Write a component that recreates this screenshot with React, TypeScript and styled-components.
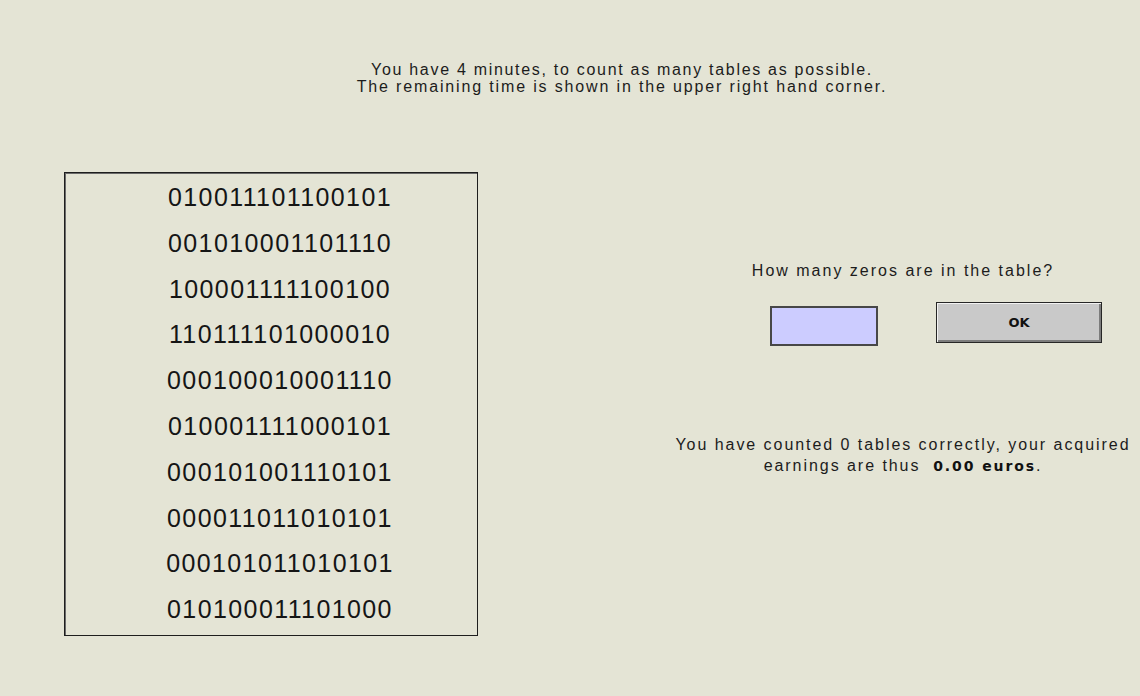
import React from "react";
import styled, { createGlobalStyle } from "styled-components";

const Global = createGlobalStyle`
  html, body { margin: 0; padding: 0; background: #e4e4d5; }
  body { font-family: "Liberation Sans", Arial, sans-serif; color: #1a1a1a; }
`;

const Page = styled.div`
  width: 1140px;
  height: 696px;
  background: #e4e4d5;
  display: flex;
  flex-direction: column;
  overflow: hidden;
`;

const Header = styled.div`
  padding: 61px 0 0 104px;
  text-align: center;
  font-size: 16px;
  line-height: 17px;
  color: #1c1c1c;
`;

const HeaderLine = styled.div<{ $spacing: number }>`
  letter-spacing: ${(p) => p.$spacing}px;
`;

const Main = styled.div`
  display: flex;
  margin-top: 77px;
`;

const TableBox = styled.div`
  margin-left: 64px;
  width: 394px;
  height: 458px;
  border: 1px solid #1e1e1e;
  box-shadow: inset 1px 1px 0 #6a6a6a;
  padding: 2px 0 2px 18px;
  box-sizing: content-box;
  display: flex;
  flex-direction: column;
  align-items: center;
`;

const Row = styled.div`
  font-size: 25px;
  line-height: 45.8px;
  height: 45.8px;
  letter-spacing: 1.4px;
  color: #151515;
`;

const Panel = styled.div`
  margin-left: 190px;
  width: 470px;
  display: flex;
  flex-direction: column;
`;

const Question = styled.div`
  margin-top: 90px;
  text-align: center;
  font-size: 16px;
  line-height: 18px;
  letter-spacing: 2px;
  color: #1c1c1c;
`;

const Controls = styled.div`
  display: flex;
  align-items: flex-start;
  gap: 58px;
  padding-left: 102px;
  margin-top: 22px;
`;

const Input = styled.input`
  margin-top: 4px;
  width: 108px;
  height: 40px;
  box-sizing: border-box;
  background: #ccccff;
  border: 2px solid #474747;
  padding: 0;
  outline: none;
`;

const OkButton = styled.button`
  width: 166px;
  height: 41px;
  box-sizing: border-box;
  background: #c9c9c9;
  border: 1px solid #262626;
  box-shadow: inset 1px 1px 0 #f2f2f2, inset -2px -2px 0 #7c7c7c;
  font-family: "DejaVu Sans", Verdana, sans-serif;
  font-weight: bold;
  font-size: 13px;
  color: #111;
  padding: 0;
`;

const Earnings = styled.div`
  margin-top: 88px;
  text-align: center;
  font-size: 16px;
  line-height: 21px;
  letter-spacing: 1.95px;
  color: #1c1c1c;
`;

const Bold = styled.b`
  font-family: "DejaVu Sans", Verdana, sans-serif;
  font-size: 14px;
  letter-spacing: 1.9px;
  color: #111;
`;

const rows = [
  "010011101100101",
  "001010001101110",
  "100001111100100",
  "110111101000010",
  "000100010001110",
  "010001111000101",
  "000101001110101",
  "000011011010101",
  "000101011010101",
  "010100011101000",
];

export default function App() {
  return (
    <>
      <Global />
      <Page>
        <Header>
          <HeaderLine $spacing={1.7}>
            You have 4 minutes, to count as many tables as possible.
          </HeaderLine>
          <HeaderLine $spacing={1.85}>
            The remaining time is shown in the upper right hand corner.
          </HeaderLine>
        </Header>
        <Main>
          <TableBox>
            {rows.map((r, i) => (
              <Row key={i}>{r}</Row>
            ))}
          </TableBox>
          <Panel>
            <Question>How many zeros are in the table?</Question>
            <Controls>
              <Input />
              <OkButton>OK</OkButton>
            </Controls>
            <Earnings>
              You have counted 0 tables correctly, your acquired
              <br />
              earnings are thus&nbsp; <Bold>0.00 euros</Bold>.
            </Earnings>
          </Panel>
        </Main>
      </Page>
    </>
  );
}
